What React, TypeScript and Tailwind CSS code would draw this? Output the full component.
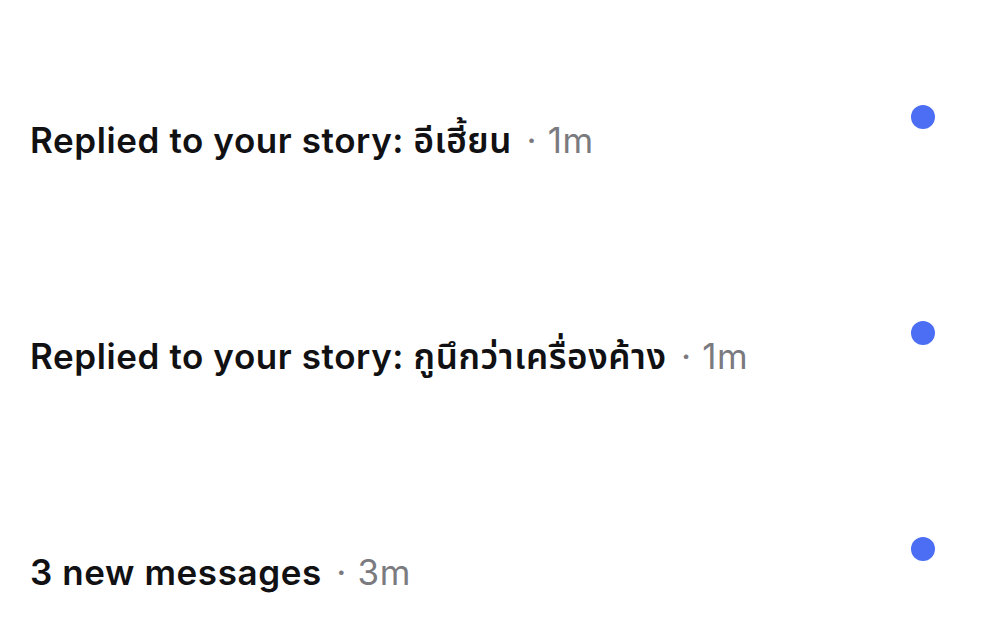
import React from "react";

type Row = { title: string; preview?: string; time: string };

const rows: Row[] = [
  { title: "Replied to your story:", preview: "อีเฮี้ยน", time: "1m" },
  { title: "Replied to your story:", preview: "กูนึกว่าเครื่องค้าง", time: "1m" },
  { title: "3 new messages", time: "3m" },
];

const NotificationRow = ({ row }: { row: Row }) => {
  return (
    <div className="flex flex-row items-start justify-between h-[216px] pl-[30px] pr-[48px]">
      <p className="mt-[15px] text-[35px] leading-[40px] tracking-[0.6px] text-[#111114] whitespace-nowrap">
        <span className="font-semibold">
          {row.title}
          {row.preview ? " " + row.preview : ""}
        </span>
        <span className="ml-[4px] text-[#7a7a7f] font-normal"> · {row.time}</span>
      </p>
      <span className="w-6 h-6 rounded-full bg-[#4c6ef5] shrink-0" />
    </div>
  );
};

const App = () => {
  return (
    <div
      className="w-[983px] h-[637px] bg-white overflow-hidden pt-[105px]"
      style={{ fontFamily: 'Inter, "Noto Sans Thai", "Noto Sans", "DejaVu Sans", sans-serif' }}
    >
      {rows.map((row, i) => (
        <NotificationRow key={i} row={row} />
      ))}
    </div>
  );
};

export default App;
